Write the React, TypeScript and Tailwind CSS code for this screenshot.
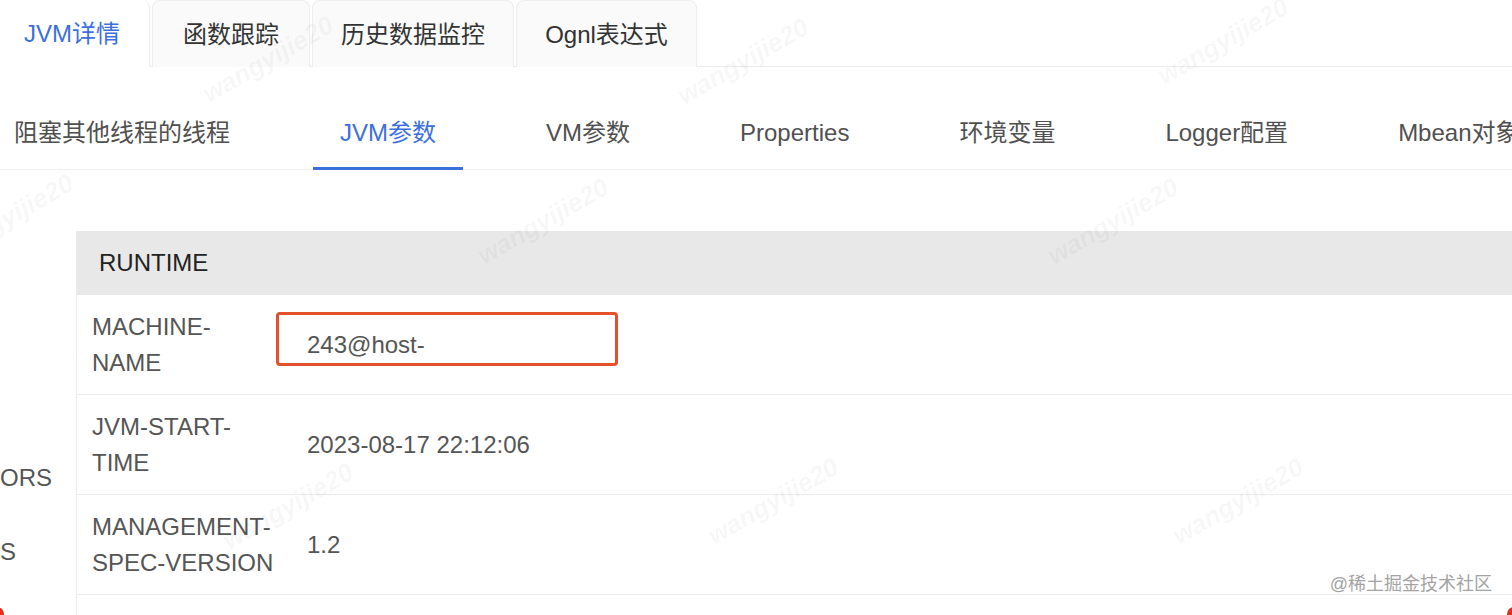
import React from "react";

const topTabs = [
  { label: "JVM详情", cls: "w-[150px] pl-[24px] bg-white text-[#3b6fe0] border-r border-[#eeeeee]" },
  { label: "函数跟踪", cls: "w-[158px] justify-center bg-[#fafafa] text-[#333] border border-b-0 border-[#eeeeee]" },
  { label: "历史数据监控", cls: "w-[202px] justify-center bg-[#fafafa] text-[#333] border border-b-0 border-[#eeeeee]" },
  { label: "Ognl表达式", cls: "w-[181px] justify-center bg-[#fafafa] text-[#333] border border-b-0 border-[#eeeeee]" },
];

const subTabs = ["阻塞其他线程的线程", "JVM参数", "VM参数", "Properties", "环境变量", "Logger配置", "Mbean对象"];

const rows = [
  { key: "MACHINE-\nNAME", value: "243@host-", marked: true },
  { key: "JVM-START-\nTIME", value: "2023-08-17 22:12:06" },
  { key: "MANAGEMENT-\nSPEC-VERSION", value: "1.2" },
  { key: "\n", value: "" },
];

const marks = [
  "left-[195px] top-[40px]",
  "left-[670px] top-[42px]",
  "left-[1150px] top-[22px]",
  "left-[-65px] top-[198px]",
  "left-[470px] top-[202px]",
  "left-[1040px] top-[202px]",
  "left-[700px] top-[482px]",
  "left-[1165px] top-[482px]",
  "left-[215px] top-[487px]",
];

export default function App() {
  return (
    <main className="relative h-[615px] w-full overflow-hidden bg-white font-['Liberation_Sans','Noto_Sans_CJK_SC',sans-serif] text-[24px]">
      {/* top tabs */}
      <div className="flex h-[67px] items-end gap-[2px] border-b border-[#ebebeb]">
        {topTabs.map((t) => (
          <div
            key={t.label}
            className={`flex h-[67px] items-center rounded-t-[8px] leading-[35px] -mb-px ${t.cls}`}
          >
            {t.label}
          </div>
        ))}
      </div>

      {/* sub tabs */}
      <div className="border-b border-[#efefef] pt-[31px]">
        <div className="ml-[-13px] flex gap-[56px] whitespace-nowrap">
          {subTabs.map((s, i) => (
            <div
              key={s}
              className={`-mb-px border-b-[3px] px-[27px] py-[17px] leading-[35px] ${
                i === 1 ? "border-[#3b6fd9] text-[#3b6fe0]" : "border-transparent text-[#505050]"
              }`}
            >
              {s}
            </div>
          ))}
        </div>
      </div>

      {/* body */}
      <div className="mt-[61px] flex">
        <div className="w-[76px] shrink-0 pt-[229px] leading-[35px] text-[#555]">
          <p>ORS</p>
          <p className="mt-[39px]">S</p>
        </div>

        <div className="flex-1 border-l border-[#ebebeb]">
          <div className="flex h-[64px] items-center bg-[#e8e8e8] px-[22px] text-[#222]">RUNTIME</div>
          {rows.map((r, i) => (
            <div key={i} className="flex border-b border-[#ebebeb] text-[#555]">
              <div className="w-[215px] shrink-0 whitespace-pre-line py-[14px] pl-[15px] leading-[35.5px]">{r.key}</div>
              <div className="relative flex flex-1 items-center pl-[15px]">
                {r.value}
                {r.marked && (
                  <span className="absolute left-[-16px] top-[17px] h-[54px] w-[342px] rounded-[4px] border-[3px] border-[#e4502b]" />
                )}
              </div>
            </div>
          ))}
        </div>
      </div>

      {/* watermarks */}
      {marks.map((m, i) => (
        <span
          key={i}
          className={`pointer-events-none absolute select-none -rotate-[30deg] text-[26px] font-bold italic text-black/[0.045] ${m}`}
        >
          wangyijie20
        </span>
      ))}

      <span className="pointer-events-none absolute bottom-[19px] right-[20px] text-[18px] leading-[24px] text-[#a3a3a3]">
        @稀土掘金技术社区
      </span>
      <span className="absolute left-[-10px] top-[607px] h-[14px] w-[14px] rounded-full bg-[#e0311f]" />
      <span className="absolute right-[-9px] top-[607px] h-[14px] w-[14px] rounded-full bg-[#e0311f]" />
    </main>
  );
}
